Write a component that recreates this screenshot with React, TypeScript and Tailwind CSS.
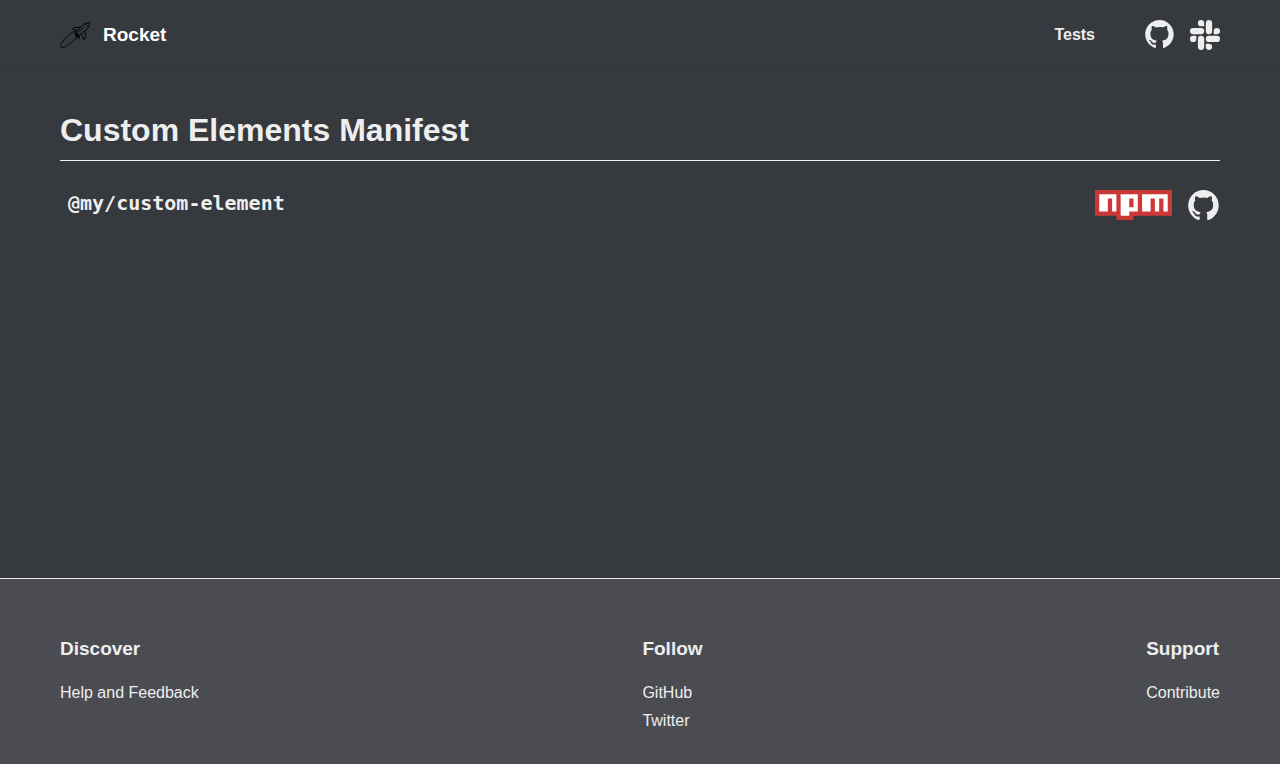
type IconProps = { className?: string };

function RocketIcon({ className }: IconProps) {
  return (
    <svg className={className} viewBox="0 0 31 27" fill="none" stroke="#050607" strokeWidth="1" strokeLinejoin="round" strokeLinecap="round" aria-hidden="true">
      <path d="M29.6.8C27 .9 24.600 1.500 22.800 3L16 10.500L19.300 13.600L27 6.800C28.700 5 29.500 3 29.600.8Z" />
      <path d="M24.800 1.800L28.700 5.500M19.300 9.800L24 4.800" />
      <path d="M21 5.300L14.800 5.500L12.800 7L17.600 8.700M25 8.800L25.500 14.500L24.200 18L21.300 12" />
      <path d="M14.500 9.300C9 11.500 3 17.500.9 22.500C-.3 25.600 1.800 26.400 5.500 24.500C10 22 15.500 17.500 18.200 14.500" />
      <path strokeWidth="1.200" d="M14.500 11.500L16.500 12.300L15.500 14L17.500 13.500L18 15.500L19.300 14M15.500 10L18.500 13.500M16.500 15L19.500 16" />
    </svg>
  );
}

function GitHubIcon({ className }: IconProps) {
  return (
    <svg className={className} viewBox="0 0 98 96" fill="currentColor" aria-hidden="true">
      <path fillRule="evenodd" d="M48.854 0C21.839 0 0 22 0 49.217c0 21.756 13.993 40.172 33.405 46.69 2.427.49 3.316-1.059 3.316-2.362 0-1.141-.08-5.052-.08-9.127-13.59 2.934-16.42-5.867-16.42-5.867-2.184-5.704-5.42-7.17-5.42-7.17-4.448-3.015.324-3.015.324-3.015 4.934.326 7.523 5.052 7.523 5.052 4.367 7.496 11.404 5.378 14.235 4.074.404-3.178 1.699-5.378 3.074-6.6-10.839-1.141-22.243-5.378-22.243-24.283 0-5.378 1.94-9.778 5.014-13.2-.485-1.222-2.184-6.275.486-13.038 0 0 4.125-1.304 13.426 5.052a46.97 46.97 0 0 1 12.214-1.63c4.125 0 8.33.571 12.213 1.63 9.302-6.356 13.427-5.052 13.427-5.052 2.67 6.763.97 11.816.485 13.038 3.155 3.422 5.015 7.822 5.015 13.2 0 18.905-11.404 23.06-22.324 24.283 1.78 1.548 3.316 4.481 3.316 9.126 0 6.6-.08 11.897-.08 13.526 0 1.304.89 2.853 3.316 2.364 19.412-6.52 33.405-24.935 33.405-46.691C97.707 22 75.788 0 48.854 0z" />
    </svg>
  );
}

function SlackIcon({ className }: IconProps) {
  return (
    <svg className={className} viewBox="0 0 24 24" fill="currentColor" aria-hidden="true">
      <path d="M5.042 15.165a2.528 2.528 0 0 1-2.52 2.523A2.528 2.528 0 0 1 0 15.165a2.527 2.527 0 0 1 2.522-2.52h2.52v2.52zM6.313 15.165a2.527 2.527 0 0 1 2.521-2.52 2.527 2.527 0 0 1 2.521 2.52v6.313A2.528 2.528 0 0 1 8.834 24a2.528 2.528 0 0 1-2.521-2.522v-6.313zM8.834 5.042a2.528 2.528 0 0 1-2.521-2.52A2.528 2.528 0 0 1 8.834 0a2.528 2.528 0 0 1 2.521 2.522v2.52H8.834zM8.834 6.313a2.528 2.528 0 0 1 2.521 2.521 2.528 2.528 0 0 1-2.521 2.521H2.522A2.528 2.528 0 0 1 0 8.834a2.528 2.528 0 0 1 2.522-2.521h6.312zM18.956 8.834a2.528 2.528 0 0 1 2.522-2.521A2.528 2.528 0 0 1 24 8.834a2.528 2.528 0 0 1-2.522 2.521h-2.522V8.834zM17.688 8.834a2.528 2.528 0 0 1-2.523 2.521 2.527 2.527 0 0 1-2.52-2.521V2.522A2.527 2.527 0 0 1 15.165 0a2.528 2.528 0 0 1 2.523 2.522v6.312zM15.165 18.956a2.528 2.528 0 0 1 2.523 2.522A2.528 2.528 0 0 1 15.165 24a2.527 2.527 0 0 1-2.52-2.522v-2.522h2.52zM15.165 17.688a2.527 2.527 0 0 1-2.52-2.523 2.526 2.526 0 0 1 2.52-2.52h6.313A2.527 2.527 0 0 1 24 15.165a2.528 2.528 0 0 1-2.522 2.523h-6.313z" />
    </svg>
  );
}

function NpmIcon({ className }: IconProps) {
  return (
    <svg className={className} viewBox="0 0 18 7" aria-hidden="true">
      <path fill="#cb3837" d="M0 0h18v6H9v1H5V6H0z" />
      <path fill="#fff" fillRule="evenodd" d="M1 5h2V2h1v3h1V1H1zM6 1v5h2V5h2V1zM8 2h1v2H8zM11 1v4h2V2h1v3h1V2h1v3h1V1z" />
    </svg>
  );
}

const columns = [
  { title: "Discover", links: ["Help and Feedback"] },
  { title: "Follow", links: ["GitHub", "Twitter"] },
  { title: "Support", links: ["Contribute"] },
];

export default function App() {
  return (
    <div className="flex min-h-screen flex-col bg-[#36393e] font-['Liberation_Sans',Arial,sans-serif] text-base text-[#eeeeee]">
      <header className="border-b border-[#303338]">
        <div className="mx-auto flex h-[70px] max-w-[1200px] items-center px-5">
          <a href="#home" className="flex items-center gap-3 text-[19px] font-bold text-white">
            <RocketIcon className="h-[27px] w-[31px]" />
            <span>Rocket</span>
          </a>
          <nav className="ml-auto flex h-[30px] items-start">
            <a href="#tests" className="mr-[50px] self-center font-bold">Tests</a>
            <a href="#github" aria-label="GitHub" className="mr-4"><GitHubIcon className="h-7 w-[29px]" /></a>
            <a href="#slack" aria-label="Slack"><SlackIcon className="size-[30px]" /></a>
          </nav>
        </div>
      </header>

      <main className="mx-auto w-full max-w-[1200px] flex-1 px-5 pt-10">
        <h1 className="border-b border-[#eeeeee] pb-[10px] text-[32px] leading-[39px] font-bold">Custom Elements Manifest</h1>
        <section className="mt-[29px] flex items-start justify-between">
          <h2 className="px-2 font-['DejaVu_Sans_Mono',monospace] text-xl leading-[26px] font-bold">@my/custom-element</h2>
          <div className="flex items-center gap-4 pr-px">
            <a href="#npm" aria-label="npm"><NpmIcon className="h-[30px] w-[77px]" /></a>
            <a href="#source" aria-label="Source on GitHub"><GitHubIcon className="h-[30px] w-[31px]" /></a>
          </div>
        </section>
      </main>

      <footer className="border-t border-[#eeeeee] bg-[#4b4c51]">
        <div className="mx-auto flex max-w-[1200px] justify-between px-5 pt-[58px] pb-[29px]">
          {columns.map((column) => (
            <nav key={column.title} aria-label={column.title}>
              <h3 className="mb-[18px] text-[19px] leading-6 font-bold">{column.title}</h3>
              <ul>
                {column.links.map((link) => (
                  <li key={link} className="leading-7"><a href={"#" + link}>{link}</a></li>
                ))}
              </ul>
            </nav>
          ))}
        </div>
      </footer>
    </div>
  );
}
